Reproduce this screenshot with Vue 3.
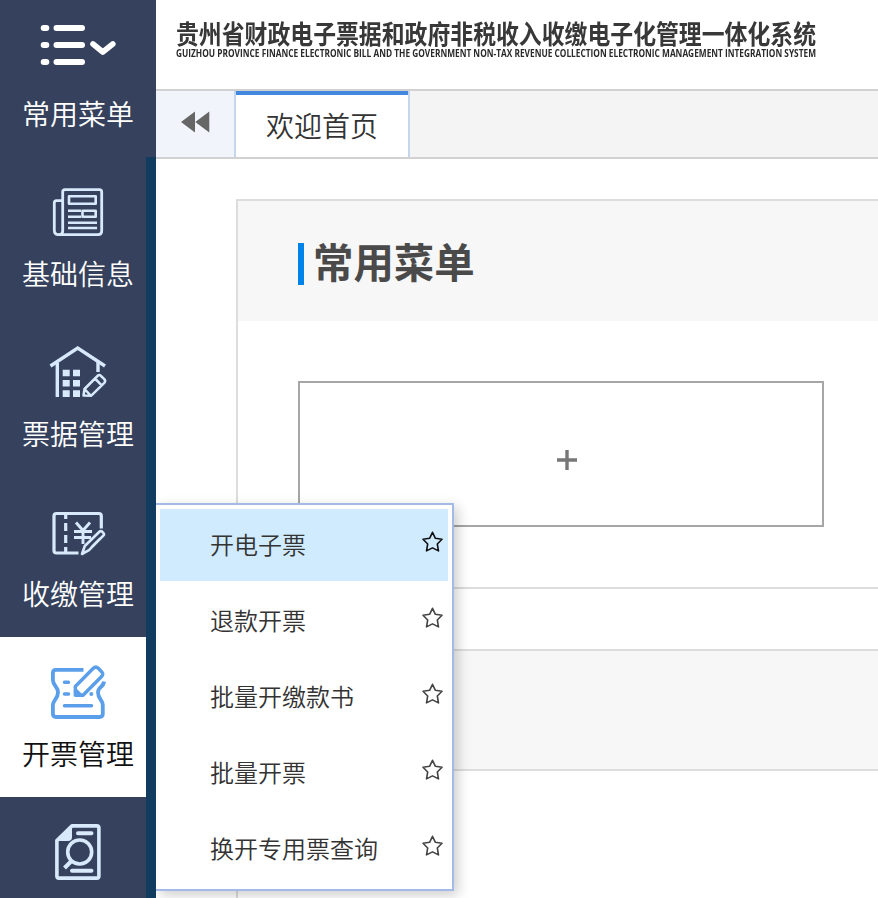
<script setup>
import { ref } from 'vue'

const navItems = [
  { id: 'base', label: '基础信息' },
  { id: 'bill', label: '票据管理' },
  { id: 'pay', label: '收缴管理' },
  { id: 'issue', label: '开票管理' },
  { id: 'query', label: '' },
]
const active = ref('issue')

const subItems = ['开电子票', '退款开票', '批量开缴款书', '批量开票', '换开专用票查询']
const highlighted = ref(0)
</script>

<template>
  <div class="app">
    <aside class="sidebar">
      <div class="nav-head">
        <svg class="head-icon" viewBox="36 20 84 50" fill="none" stroke="#fff" stroke-linecap="round" stroke-width="6">
          <path d="M43.7 28H46.3M43.7 45H46.3M43.7 62H46.3M56.5 28H82M56.5 45H82M56.5 62H82" />
          <path d="M93 44L102.8 52L112.8 44" stroke-width="5.6" stroke-linejoin="round" />
        </svg>
        <span class="nav-label">常用菜单</span>
      </div>
      <div
        v-for="item in navItems"
        :key="item.id"
        class="nav-item"
        :class="{ active: item.id === active }"
        @click="active = item.id"
      >
        <svg v-if="item.id === 'base'" class="nav-icon" viewBox="48 182 60 60" fill="none" stroke="#d9e9fc" stroke-width="2.8" stroke-linejoin="round">
          <path d="M62.7 231V192Q62.7 189.7 65 189.7H99.3Q101.7 189.7 101.7 192V231Q101.7 234.7 98 234.7H58.5Q54.3 234.7 54.3 230V203Q54.3 200.7 56.6 200.7H62.7M62.7 231Q62.7 234.7 59 234.7" />
          <path d="M69 196.2H95.7V203.7H69ZM82.5 210.7H95.7V216.7H82.5Z" stroke-width="2.6" />
          <path d="M68 210.7H81M68 216.7H81M68 222.7H97M68 228H97" stroke-width="2.5" />
        </svg>
        <svg v-else-if="item.id === 'bill'" class="nav-icon" viewBox="48 342 60 60" fill="none" stroke="#d9e9fc" stroke-width="3.4">
          <path d="M50.5 366L77.7 348L105 366" />
          <path d="M57.3 363V397M98 362V372" />
          <path d="M62.7 369.7h7v6.6h-7zM73 369.7h7v6.6h-7zM62.7 380h7v6.6h-7zM73 380h7v6.6h-7zM62.7 390.3h7v6.6h-7zM73 390.3h7v6.6h-7z" fill="#d9e9fc" stroke="none" />
          <path d="M83.5 395.5L84.5 389L97.5 376Q99.3 374.2 101 376L104.3 379.2Q106 381 104.3 382.8L91 395.8ZM84.5 389L91 395.8M95 378.5L101.7 385.3" stroke-width="2.5" stroke-linejoin="round" />
        </svg>
        <svg v-else-if="item.id === 'pay'" class="nav-icon" viewBox="48 502 60 60" fill="none" stroke="#d9e9fc" stroke-width="3.2">
          <path d="M101.3 528.5V516Q101.3 513.5 98.8 513.5H56.5Q54 513.5 54 516V550.5Q54 553 56.5 553H78.5" />
          <path d="M65.7 514V519M65.7 523V531M65.7 535V543M65.7 547V553" />
          <path d="M76 522.5L83 530.5L90 522.5M83 530.5V544M74 531.5H92M74 537.5H91" stroke-width="2.9" />
          <path d="M82 554L84.8 546L99.4 531.8Q100.8 530.4 102.3 531.8L103.3 532.8Q104.7 534.2 103.3 535.7L89 550.2Z" stroke-width="2.6" stroke-linejoin="round" />
          <path d="M91 547L100 538" stroke-width="1.5" />
        </svg>
        <svg v-else-if="item.id === 'issue'" class="nav-icon" viewBox="48 662 60 60" fill="none" stroke="#5b9ee9" stroke-width="3.8">
          <path d="M83.5 669.9H56Q52.9 669.9 52.9 673V680C53 686 58 686 58 692.5S53 700 52.9 705V713.8Q52.9 717 56 717H99.5Q102.8 717 102.8 713.8V705C102.8 700 98 699 98 692.5C98 686 103.5 688 104 681.5" />
          <path d="M64.5 682.3H68.5M64.5 694H68.5M64.5 705.7H91.5" stroke-linecap="round" stroke-width="3.5" />
          <path d="M75.3 695.3V686.5L93.3 668.3Q95.8 666 98.3 668.3L101.6 671.7Q104 674 101.6 676.5L83 695.3Z" stroke-width="3.4" stroke-linejoin="round" />
          <path d="M74 686L84 696H74Z" fill="#5b9ee9" stroke="none" />
          <circle cx="91.3" cy="694" r="2" fill="#5b9ee9" stroke="none" />
        </svg>
        <svg v-else class="nav-icon" viewBox="48 822 60 60" fill="none" stroke="#d9e9fc" stroke-width="3.6">
          <path d="M72 825.9H96.7Q98.9 825.9 98.9 828V876Q98.9 878.1 96.7 878.1H59Q56.9 878.1 56.9 876V840.5Z" stroke-linejoin="round" />
          <path d="M55.3 841L72 824.2V837Q72 841 68 841Z" fill="#d9e9fc" stroke="none" />
          <circle cx="79.7" cy="852" r="12" />
          <path d="M71.5 861L64.5 868" stroke-width="4" />
          <path d="M78 833.2H91.5M72 870.7H91.5" stroke-width="4" stroke-linecap="round" />
        </svg>
        <span class="nav-label">{{ item.label }}</span>
      </div>
    </aside>

    <main class="main">
      <header class="header">
        <svg class="brand" viewBox="0 0 660 50">
          <text x="0" y="33.5" class="brand-cn" textLength="640" lengthAdjust="spacingAndGlyphs">贵州省财政电子票据和政府非税收入收缴电子化管理一体化系统</text>
          <text x="0" y="47.3" class="brand-en" textLength="640" lengthAdjust="spacingAndGlyphs">GUIZHOU PROVINCE FINANCE ELECTRONIC BILL AND THE GOVERNMENT NON-TAX REVENUE COLLECTION ELECTRONIC MANAGEMENT INTEGRATION SYSTEM</text>
        </svg>
      </header>

      <nav class="tabs">
        <button class="collapse">
          <svg viewBox="0 0 30 22" width="30" height="22" fill="#666"><path d="M1 11L15 .5V21.5ZM15.3 11L29.3 .5V21.5Z" /></svg>
        </button>
        <div class="tab">欢迎首页</div>
      </nav>

      <div class="content">
        <section class="panel">
          <div class="panel-head">
            <span class="bar"></span>
            <h2>常用菜单</h2>
          </div>
          <div class="panel-body">
            <div class="add">
              <svg viewBox="0 0 22 22" width="22" height="22" stroke="#777" stroke-width="3.4"><path d="M11 1V21M1 11H21" /></svg>
            </div>
          </div>
        </section>
        <section class="panel second">
          <div class="panel-head"></div>
        </section>
      </div>
    </main>

    <div class="flyout">
      <div
        v-for="(name, i) in subItems"
        :key="name"
        class="sub"
        :class="{ on: i === highlighted }"
        @mouseenter="highlighted = i"
      >
        <span class="sub-name">{{ name }}</span>
        <svg class="star" viewBox="0 0 22 22" fill="none" stroke="currentColor" stroke-width="1.6" stroke-linejoin="round">
          <path d="M11.5 1.3L14.4 7.3L21 8.3L16.3 13L17.5 19.9L11.5 16.9L5.5 19.9L6.7 13L2 8.3L8.6 7.3Z" />
        </svg>
      </div>
    </div>
  </div>
</template>

<style>
body {
  margin: 0;
  overflow: hidden;
}
</style>

<style scoped>
* {
  box-sizing: border-box;
}
.app {
  position: relative;
  display: flex;
  width: 878px;
  height: 898px;
  overflow: hidden;
  background: #fff;
  font-family: "Noto Sans CJK SC", sans-serif;
}
.sidebar {
  flex: none;
  width: 156px;
  background: #36425d;
}
.nav-head {
  height: 157px;
  padding-top: 20px;
  display: flex;
  flex-direction: column;
  align-items: center;
}
.head-icon {
  width: 84px;
  height: 50px;
}
.nav-label {
  height: 40px;
  line-height: 40px;
  font-size: 28px;
  font-weight: 350;
  color: #fff;
  white-space: nowrap;
}
.nav-head .nav-label {
  margin-top: 23px;
}
.nav-item {
  height: 160px;
  padding: 25px 12px 0 22px;
  border-right: 10px solid #123b60;
  display: flex;
  flex-direction: column;
  align-items: center;
}
.nav-icon {
  width: 60px;
  height: 60px;
  flex: none;
}
.nav-item .nav-label {
  margin-top: 11px;
}
.nav-item.active {
  background: #fff;
}
.nav-item.active .nav-label {
  color: #111;
}
.main {
  flex: 1;
  min-width: 0;
}
.header {
  height: 91px;
  padding: 10px 0 0 20px;
  border-bottom: 2px solid #d1d1d1;
}
.brand {
  display: block;
  width: 660px;
  height: 50px;
  overflow: visible;
  filter: blur(0.6px);
}
.brand-cn {
  font-size: 26.5px;
  font-weight: 700;
  fill: #383838;
}
.brand-en {
  font-family: "Open Sans", sans-serif;
  font-size: 10.5px;
  font-weight: 700;
  fill: #2a2a2a;
}
.tabs {
  display: flex;
  height: 68px;
  background: #f4f4f4;
  border-bottom: 2px solid #d1d1d1;
}
.collapse {
  width: 78px;
  padding: 0 0 4px;
  border: 0;
  background: #f1f5fb;
  display: flex;
  align-items: center;
  justify-content: center;
}
.tab {
  width: 176px;
  border: solid #c3d6ec;
  border-width: 0 2px;
  box-shadow: inset 0 4px #4288e0;
  background: #fff;
  font-size: 28px;
  font-weight: 350;
  line-height: 68px;
  text-align: center;
  color: #333;
}
.content {
  padding: 40px 0 0 80px;
}
.panel {
  height: 390px;
  border: 2px solid #ddd;
  border-right: 0;
}
.panel-head {
  height: 120px;
  padding-left: 60px;
  display: flex;
  align-items: center;
  gap: 9px;
  background: #f7f7f7;
}
.bar {
  width: 6px;
  height: 42px;
  margin-top: 6px;
  background: #0083e8;
}
h2 {
  margin: 0;
  font-size: 40.4px;
  line-height: 60px;
  font-weight: 700;
  color: #4a4a4a;
}
.panel-body {
  padding: 60px;
}
.add {
  width: 526px;
  height: 146px;
  padding: 12px 0 0 12px;
  border: 2px solid #a6a6a6;
  display: flex;
  align-items: center;
  justify-content: center;
}
.second {
  margin-top: 60px;
}
.second .panel-head {
  border-bottom: 2px solid #ddd;
}
.flyout {
  position: absolute;
  left: 156px;
  top: 503px;
  width: 298px;
  height: 388px;
  padding: 4px 4px 0;
  border: 2px solid #a3b9e6;
  border-left: 0;
  background: #fff;
  box-shadow: 4px 4px 12px rgba(0, 0, 0, 0.2);
  clip-path: inset(-30px -30px -30px 0);
}
.sub {
  height: 72px;
  margin-bottom: 4px;
  padding: 0 5px 0 50px;
  display: flex;
  align-items: center;
  justify-content: space-between;
  font-size: 24px;
  font-weight: 350;
  color: #333;
}
.sub.on {
  background: #d0ebfe;
}
.sub-name {
  margin-top: -3px;
}
.star {
  width: 22px;
  height: 22px;
  margin-top: -7px;
  color: #444;
}
.sub.on .star {
  color: #111;
}
</style>
